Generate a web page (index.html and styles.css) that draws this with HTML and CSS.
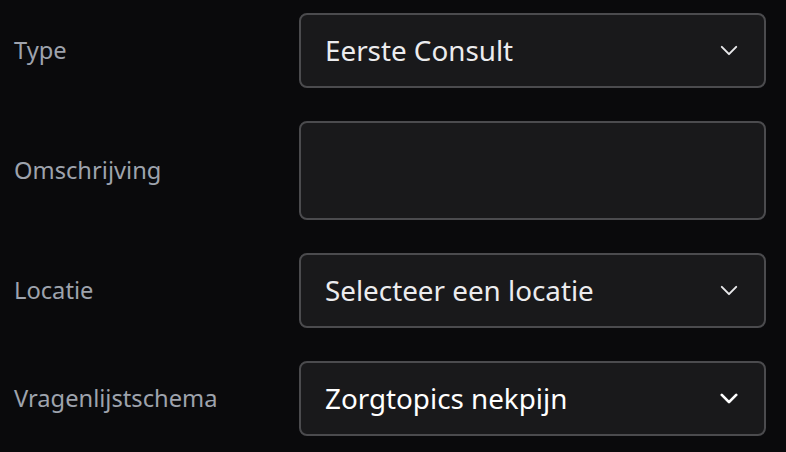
FILE: index.html
```html
<!DOCTYPE html>
<html lang="nl">
<head>
<meta charset="utf-8">
<title>Afspraak</title>
<link rel="stylesheet" href="styles.css">
</head>
<body>
<form class="form">
  <div class="row">
    <label class="label">Type</label>
    <div class="select">
      <span class="value">Eerste Consult</span>
      <svg class="chev" viewBox="0 0 20 12"><path d="M2 2l8 8 8-8"/></svg>
    </div>
  </div>
  <div class="row">
    <label class="label">Omschrijving</label>
    <div class="textarea"></div>
  </div>
  <div class="row">
    <label class="label">Locatie</label>
    <div class="select">
      <span class="value">Selecteer een locatie</span>
      <svg class="chev" viewBox="0 0 20 12"><path d="M2 2l8 8 8-8"/></svg>
    </div>
  </div>
  <div class="row">
    <label class="label">Vragenlijstschema</label>
    <div class="select select-strong">
      <span class="value">Zorgtopics nekpijn</span>
      <svg class="chev" viewBox="0 0 20 12"><path d="M2 2l8 8 8-8"/></svg>
    </div>
  </div>
</form>
</body>
</html>
```
FILE: styles.css
```css
html, body {
  margin: 0;
  background: #0a0a0c;
  font-family: "Noto Sans", "Open Sans", sans-serif;
}

.form {
  display: flex;
  flex-direction: column;
  gap: 33px;
  margin: 0;
  padding: 13px 20px 0 14px;
}

.row {
  display: grid;
  grid-template-columns: 285px 1fr;
  align-items: center;
}

.label {
  color: #9ea3ad;
  font-size: 23.7px;
  line-height: 1.2;
}

.select, .textarea {
  box-sizing: border-box;
  background: #19191b;
  border: 2px solid #4b4b4e;
  border-radius: 8px;
}

.select {
  height: 75px;
  display: flex;
  align-items: center;
  justify-content: space-between;
  padding: 0 26px 0 24px;
}

.textarea {
  height: 99px;
}

.value {
  color: #ececee;
  font-size: 27.8px;
  line-height: 1.2;
}

.chev {
  width: 18px;
  height: 11px;
  fill: none;
  stroke: #e8e8ea;
  stroke-width: 2.2;
  stroke-linecap: round;
  stroke-linejoin: round;
}

.select-strong .value {
  color: #ffffff;
}

.select-strong .chev {
  stroke: #ffffff;
  stroke-width: 3;
}
```
